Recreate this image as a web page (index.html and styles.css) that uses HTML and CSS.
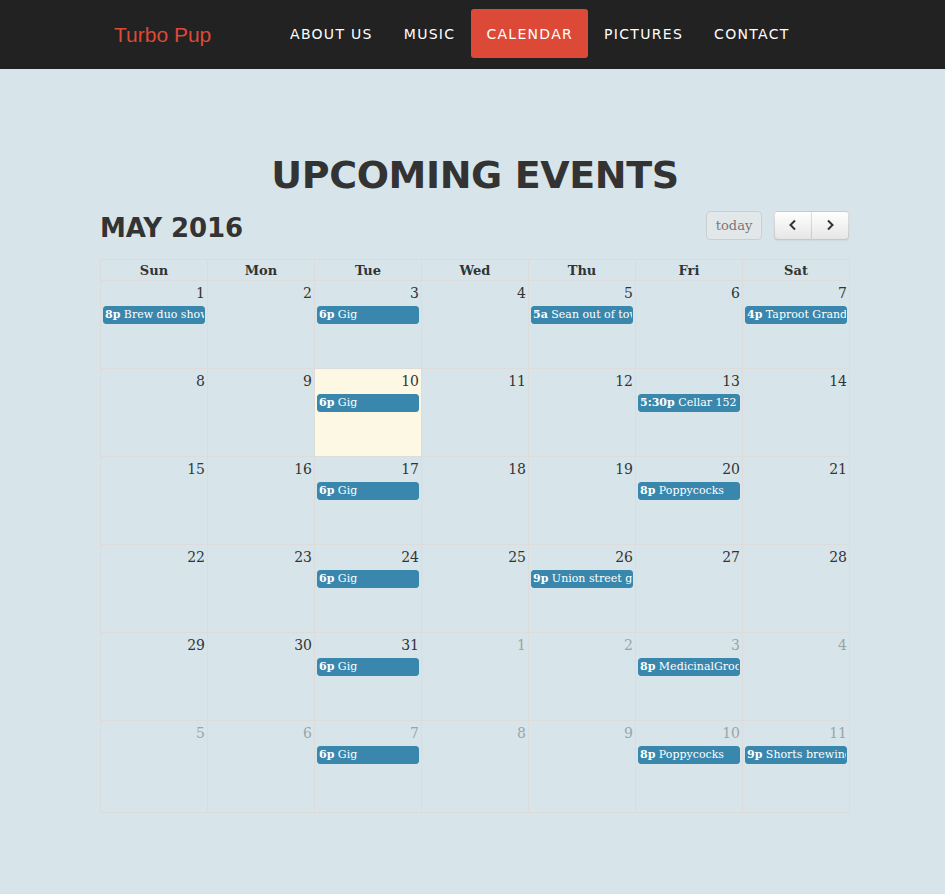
FILE: index.html
```html
<!DOCTYPE html>
<html lang="en">
<head>
<meta charset="utf-8">
<title>Turbo Pup - Calendar</title>
<link rel="stylesheet" href="styles.css">
</head>
<body>
<header class="navbar">
  <div class="nav-inner">
    <a class="brand" href="#">Turbo Pup</a>
    <ul class="menu">
      <li><a href="#">About Us</a></li>
      <li><a href="#">Music</a></li>
      <li class="active"><a href="#">Calendar</a></li>
      <li><a href="#">Pictures</a></li>
      <li><a href="#">Contact</a></li>
    </ul>
  </div>
</header>
<main class="content">
  <h1 class="page-title">Upcoming Events</h1>
  <div class="toolbar">
    <h2 class="month">May 2016</h2>
    <div class="controls">
      <button class="btn btn-today">today</button>
      <div class="btn-group">
        <button class="btn btn-nav"><svg width="10" height="12" viewBox="0 0 10 12"><polyline points="7,1.5 2.5,6 7,10.5" fill="none" stroke="#333" stroke-width="2"/></svg></button>
        <button class="btn btn-nav"><svg width="10" height="12" viewBox="0 0 10 12"><polyline points="3,1.5 7.5,6 3,10.5" fill="none" stroke="#333" stroke-width="2"/></svg></button>
      </div>
    </div>
  </div>
  <table class="cal">
    <thead>
      <tr><th>Sun</th><th>Mon</th><th>Tue</th><th>Wed</th><th>Thu</th><th>Fri</th><th>Sat</th></tr>
    </thead>
    <tbody>
      <tr>
        <td><div class="num">1</div><div class="ev"><b>8p</b> Brew duo show</div></td>
        <td><div class="num">2</div></td>
        <td><div class="num">3</div><div class="ev"><b>6p</b> Gig</div></td>
        <td><div class="num">4</div></td>
        <td><div class="num">5</div><div class="ev"><b>5a</b> Sean out of town</div></td>
        <td><div class="num">6</div></td>
        <td><div class="num">7</div><div class="ev"><b>4p</b> Taproot Grand</div></td>
      </tr>
      <tr>
        <td><div class="num">8</div></td>
        <td><div class="num">9</div></td>
        <td class="today"><div class="num">10</div><div class="ev"><b>6p</b> Gig</div></td>
        <td><div class="num">11</div></td>
        <td><div class="num">12</div></td>
        <td><div class="num">13</div><div class="ev"><b>5:30p</b> Cellar 152</div></td>
        <td><div class="num">14</div></td>
      </tr>
      <tr>
        <td><div class="num">15</div></td>
        <td><div class="num">16</div></td>
        <td><div class="num">17</div><div class="ev"><b>6p</b> Gig</div></td>
        <td><div class="num">18</div></td>
        <td><div class="num">19</div></td>
        <td><div class="num">20</div><div class="ev"><b>8p</b> Poppycocks</div></td>
        <td><div class="num">21</div></td>
      </tr>
      <tr>
        <td><div class="num">22</div></td>
        <td><div class="num">23</div></td>
        <td><div class="num">24</div><div class="ev"><b>6p</b> Gig</div></td>
        <td><div class="num">25</div></td>
        <td><div class="num">26</div><div class="ev"><b>9p</b> Union street gig</div></td>
        <td><div class="num">27</div></td>
        <td><div class="num">28</div></td>
      </tr>
      <tr>
        <td><div class="num">29</div></td>
        <td><div class="num">30</div></td>
        <td><div class="num">31</div><div class="ev"><b>6p</b> Gig</div></td>
        <td class="other"><div class="num">1</div></td>
        <td class="other"><div class="num">2</div></td>
        <td class="other"><div class="num">3</div><div class="ev"><b>8p</b> MedicinalGroove</div></td>
        <td class="other"><div class="num">4</div></td>
      </tr>
      <tr class="last">
        <td class="other"><div class="num">5</div></td>
        <td class="other"><div class="num">6</div></td>
        <td class="other"><div class="num">7</div><div class="ev"><b>6p</b> Gig</div></td>
        <td class="other"><div class="num">8</div></td>
        <td class="other"><div class="num">9</div></td>
        <td class="other"><div class="num">10</div><div class="ev"><b>8p</b> Poppycocks</div></td>
        <td class="other"><div class="num">11</div><div class="ev"><b>9p</b> Shorts brewing</div></td>
      </tr>
    </tbody>
  </table>
</main>
</body>
</html>
```

FILE: styles.css
```css
* { box-sizing: border-box; }

body {
  margin: 0;
  background: #d7e5ea;
  font-family: "DejaVu Serif", serif;
  color: #333;
}

.navbar {
  height: 69px;
  background: #222222;
}

.nav-inner {
  margin-left: 100px;
  width: 750px;
  height: 69px;
  display: flex;
  align-items: center;
}

.brand {
  font-family: "Liberation Sans", Arial, sans-serif;
  font-size: 21px;
  color: #dc4937;
  text-decoration: none;
  padding-left: 14px;
  width: 175px;
  margin-top: 1px;
}

.menu {
  list-style: none;
  margin: -2px 0 0 0;
  padding: 0;
  display: flex;
  gap: 1px;
}

.menu li a {
  display: block;
  padding: 0 15px;
  height: 49px;
  line-height: 50px;
  color: #fff;
  text-decoration: none;
  text-transform: uppercase;
  font-family: "DejaVu Sans", sans-serif;
  font-size: 14px;
  letter-spacing: 1.3px;
  border-radius: 3px;
}

.menu li.active a {
  background: #dc4937;
}

.content {
  margin-left: 100px;
  width: 750px;
  padding-top: 83px;
}

.page-title {
  margin: 0;
  text-align: center;
  font-family: "DejaVu Sans", sans-serif;
  font-weight: bold;
  font-size: 38px;
  line-height: 46px;
  text-transform: uppercase;
  color: #333;
  letter-spacing: -0.4px;
}

.toolbar {
  display: flex;
  justify-content: space-between;
  align-items: center;
  margin-top: 7px;
  height: 40px;
}

.month {
  margin: 6px 0 0 0;
  font-family: "DejaVu Sans", sans-serif;
  font-weight: bold;
  font-size: 26px;
  text-transform: uppercase;
  color: #333;
  letter-spacing: -0.1px;
}

.controls {
  display: flex;
  gap: 12px;
  align-items: center;
  margin-right: 1px;
}

.btn {
  height: 29px;
  border: 1px solid rgba(0,0,0,0.12);
  border-bottom-color: rgba(0,0,0,0.22);
  font-family: "DejaVu Serif", serif;
  font-size: 13px;
  color: #333;
  padding: 0 9px;
  border-radius: 4px;
  background: linear-gradient(#ffffff, #e6e6e6);
  box-shadow: inset 0 1px 0 rgba(255,255,255,0.2), 0 1px 2px rgba(0,0,0,0.05);
}

.btn-today {
  width: 56px;
  padding: 0;
  background: #e2e8ea;
  color: #777;
  box-shadow: none;
  border-color: #c9cfd1;
}

.btn-group {
  display: flex;
}

.btn-nav {
  width: 38px;
  display: flex;
  align-items: center;
  justify-content: center;
}

.btn-group .btn-nav:first-child {
  border-radius: 4px 0 0 4px;
}

.btn-group .btn-nav:last-child {
  border-radius: 0 4px 4px 0;
  margin-left: -1px;
}

.cal {
  width: 750px;
  margin-top: 14px;
  border-collapse: collapse;
  table-layout: fixed;
}

.cal th, .cal td {
  border: 1px solid #dcdcdc;
}

.cal th {
  height: 21px;
  font-size: 13px;
  font-weight: bold;
  padding: 0;
  color: #333;
}

.cal td {
  height: 88px;
  vertical-align: top;
  padding: 0;
}

.cal tr.last td {
  height: 92px;
}

.cal td.today {
  background: #fcf8e3;
}

.num {
  text-align: right;
  font-size: 14px;
  line-height: 18px;
  padding: 3px 2px 0 0;
  color: #333;
}

.other .num {
  color: #9aa4a8;
}

.ev {
  margin: 4px 2px 0 2px;
  height: 18px;
  background: #3a87ad;
  border: 1px solid #3a87ad;
  border-radius: 3px;
  color: #fff;
  font-size: 11px;
  line-height: 16px;
  white-space: nowrap;
  overflow: hidden;
  padding-left: 1px;
}

.ev b {
  font-weight: bold;
}
```
